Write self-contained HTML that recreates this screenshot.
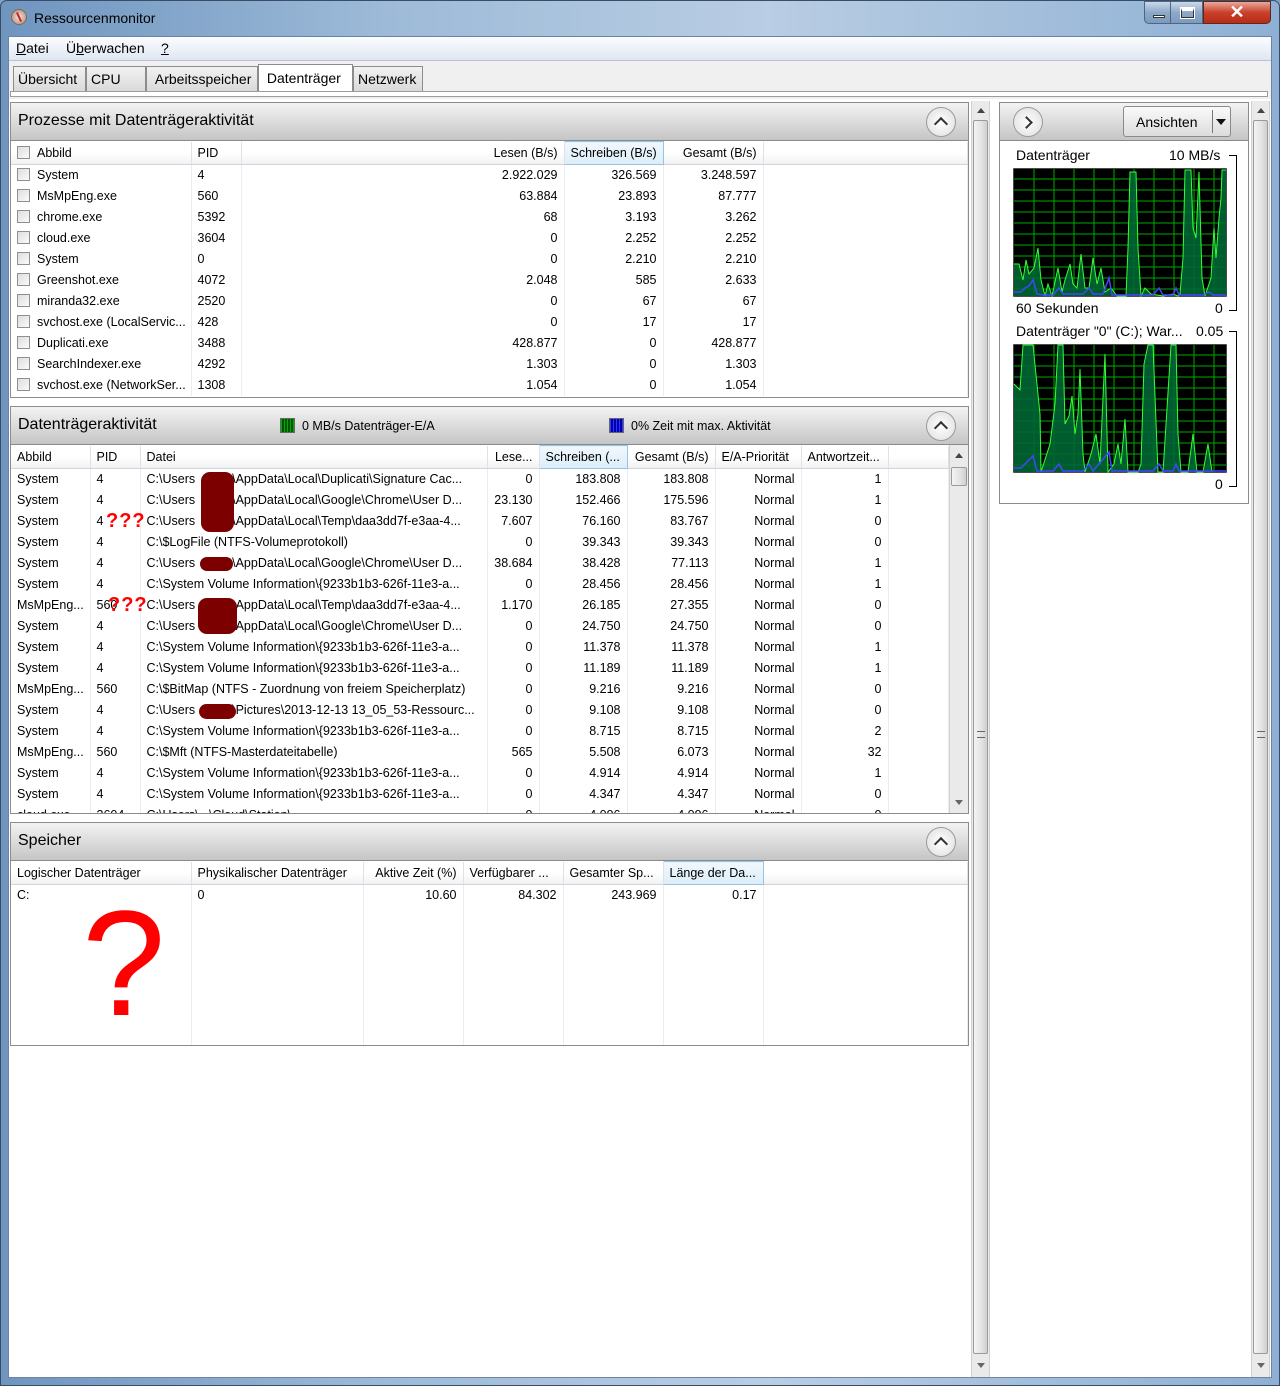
<!DOCTYPE html>
<html><head><meta charset="utf-8">
<style>
*{box-sizing:border-box;margin:0;padding:0}
body{width:1280px;height:1386px;position:relative;overflow:hidden;background:#7fa3c8;font-family:"Liberation Sans",sans-serif;font-size:12px;color:#000}
.a{position:absolute}
.frame{left:0;top:0;width:1280px;height:1386px;background:linear-gradient(90deg,#6f95bf,#9dbad8 30%,#b9cde3 60%,#8eb0d4);border:1px solid #3a4d66;border-radius:7px 7px 0 0}
.client{left:8px;top:36px;width:1264px;height:1342px;background:#fff;border:1px solid #6d83a0}
.menu{left:9px;top:37px;width:1262px;height:24px;background:linear-gradient(#fbfcfe,#dfe7f3);border-bottom:1px solid #b6c2d4;font-size:14px}
.menu span{position:absolute;top:3px}
.tabbar{left:9px;top:61px;width:1262px;height:38px;background:#f0f0f0}
.tab{position:absolute;top:66px;height:26px;border:1px solid #8c8c8c;border-bottom:none;background:linear-gradient(#f2f2f2,#d8d8d8);font-size:14px;padding:4px 0 0 4px}
.panel{border:1px solid #8c8c8c;background:#fff}
.hdr{position:absolute;left:0;right:0;top:0;height:38px;background:linear-gradient(#f3f3f3,#c5c5c5);border-bottom:1px solid #8a8a8a;font-size:16px;padding:9px 0 0 7px}
.cb,.cb2{position:absolute;width:30px;height:30px;border-radius:50%;border:1px solid #9a9a9a;background:radial-gradient(#fff,#ddd);top:4px}
.cb::after{content:"";position:absolute;left:9px;top:11px;width:8px;height:8px;border-left:2.5px solid #333;border-top:2.5px solid #333;transform:rotate(45deg)}
.cb2::after{content:"";position:absolute;left:8px;top:10px;width:7px;height:7px;border-right:2.5px solid #333;border-top:2.5px solid #333;transform:rotate(45deg)}
table{border-collapse:collapse;table-layout:fixed;position:absolute}
td{height:21px;padding:0 6px;white-space:nowrap;overflow:hidden;border-right:1px solid #e7eef7;font-size:12.5px}
tr.h td{height:23px;background:linear-gradient(#fff 50%,#f1f2f4);border-right:1px solid #dde2e8;border-bottom:1px solid #d5d5d5}
tr.h td.s{background:linear-gradient(#f0f8fd,#dcedf8);border:1px solid #96c4e6}
.r{text-align:right}
.chk{display:inline-block;width:13px;height:13px;border:1px solid #8f8f8f;background:linear-gradient(135deg,#ddd,#fafafa);vertical-align:-2px;margin-right:7px}
.blob{position:absolute;background:#7c0000;border-radius:9px}
.q{position:absolute;color:#f00;font-size:20px;font-weight:bold;letter-spacing:1px}
.sb{background:#eaeaea;border-left:1px solid #d0d0d0}
.thumb{position:absolute;left:1px;right:1px;border:1px solid #9a9a9a;border-radius:2px;background:linear-gradient(90deg,#f4f4f4,#e2e2e2 60%,#cfcfcf)}
.tri-u{position:absolute;width:0;height:0;border-left:4px solid transparent;border-right:4px solid transparent;border-bottom:5px solid #444}
.tri-d{position:absolute;width:0;height:0;border-left:4px solid transparent;border-right:4px solid transparent;border-top:5px solid #666}
.g{display:inline-block;width:37px}
</style></head><body>
<div class="a frame"></div>
<div class="a" style="left:11px;top:9px;width:16px;height:16px;border-radius:50%;background:radial-gradient(#f4e6dc,#b08070);border:1px solid #7a6a60"><div class="a" style="left:6px;top:2px;width:2px;height:10px;background:#c22;transform:rotate(-25deg)"></div></div>
<div class="a" style="left:34px;top:10px;font-size:14px;color:#000">Ressourcenmonitor</div>
<div class="a" style="left:1144px;top:1px;width:27px;height:23px;border:1px solid #4f6580;border-radius:0 0 0 5px;background:linear-gradient(#c9d9ea,#8ea9c8 50%,#7d9abd)"><div class="a" style="left:8px;top:13px;width:12px;height:3px;background:#fff;border:1px solid #333"></div></div>
<div class="a" style="left:1170px;top:1px;width:33px;height:23px;border:1px solid #4f6580;background:linear-gradient(#c9d9ea,#8ea9c8 50%,#7d9abd)"><div class="a" style="left:10px;top:6px;width:13px;height:10px;border:1px solid #333;border-top:3px solid #fff;outline:1px solid #fff"></div></div>
<div class="a" style="left:1203px;top:1px;width:68px;height:23px;border:1px solid #5a2a20;border-radius:0 0 5px 0;background:linear-gradient(#e9a89a,#c9402b 50%,#b82c16);color:#fff;font-size:18px;font-weight:bold;text-align:center;line-height:21px">✕</div>
<div class="a client"></div>
<div class="a menu"><span style="left:7px"><u>D</u>atei</span><span style="left:57px">Ü<u>b</u>erwachen</span><span style="left:152px"><u>?</u></span></div>
<div class="a tabbar"></div>
<div class="tab" style="left:13px;width:73px">Übersicht</div>
<div class="tab" style="left:86px;width:60px">CPU</div>
<div class="tab" style="left:146px;width:112px">&nbsp;Arbeitsspeicher</div>
<div class="tab" style="left:258px;top:64px;height:30px;width:95px;background:#fff;padding-top:5px">&nbsp;Datenträger</div>
<div class="tab" style="left:353px;width:70px">Netzwerk</div>
<div class="a" style="left:10px;top:91px;width:1258px;height:6px;border:1px solid #9c9c9c;background:#fff"></div>

<div class="a panel" style="left:10px;top:102px;width:959px;height:296px">
<div class="hdr">Prozesse mit Datenträgeraktivität<div class="cb" style="right:12px"></div></div>
<table style="left:0;top:38px;width:957px">
<colgroup><col style="width:180px"><col style="width:50px"><col style="width:323px"><col style="width:99px"><col style="width:100px"><col></colgroup>
<tr class="h"><td><span class="chk"></span>Abbild</td><td>PID</td><td class="r">Lesen (B/s)</td><td class="s r">Schreiben (B/s)</td><td class="r">Gesamt (B/s)</td><td></td></tr>
<tr><td><span class="chk"></span>System</td><td>4</td><td class="r">2.922.029</td><td class="r">326.569</td><td class="r">3.248.597</td><td></td></tr>
<tr><td><span class="chk"></span>MsMpEng.exe</td><td>560</td><td class="r">63.884</td><td class="r">23.893</td><td class="r">87.777</td><td></td></tr>
<tr><td><span class="chk"></span>chrome.exe</td><td>5392</td><td class="r">68</td><td class="r">3.193</td><td class="r">3.262</td><td></td></tr>
<tr><td><span class="chk"></span>cloud.exe</td><td>3604</td><td class="r">0</td><td class="r">2.252</td><td class="r">2.252</td><td></td></tr>
<tr><td><span class="chk"></span>System</td><td>0</td><td class="r">0</td><td class="r">2.210</td><td class="r">2.210</td><td></td></tr>
<tr><td><span class="chk"></span>Greenshot.exe</td><td>4072</td><td class="r">2.048</td><td class="r">585</td><td class="r">2.633</td><td></td></tr>
<tr><td><span class="chk"></span>miranda32.exe</td><td>2520</td><td class="r">0</td><td class="r">67</td><td class="r">67</td><td></td></tr>
<tr><td><span class="chk"></span>svchost.exe (LocalServic...</td><td>428</td><td class="r">0</td><td class="r">17</td><td class="r">17</td><td></td></tr>
<tr><td><span class="chk"></span>Duplicati.exe</td><td>3488</td><td class="r">428.877</td><td class="r">0</td><td class="r">428.877</td><td></td></tr>
<tr><td><span class="chk"></span>SearchIndexer.exe</td><td>4292</td><td class="r">1.303</td><td class="r">0</td><td class="r">1.303</td><td></td></tr>
<tr><td><span class="chk"></span>svchost.exe (NetworkSer...</td><td>1308</td><td class="r">1.054</td><td class="r">0</td><td class="r">1.054</td><td></td></tr>
</table>
</div>

<div class="a panel" style="left:10px;top:406px;width:959px;height:408px;overflow:hidden">
<div class="hdr">Datenträgeraktivität<div class="cb" style="right:12px"></div>
<div class="a" style="left:269px;top:11px;width:15px;height:15px;border:1px solid #666;background:repeating-linear-gradient(90deg,#0a0 0 1px,#050 1px 3px)"></div>
<div class="a" style="left:291px;top:12px;font-size:12.5px">0 MB/s Datenträger-E/A</div>
<div class="a" style="left:598px;top:11px;width:15px;height:15px;border:1px solid #666;background:repeating-linear-gradient(90deg,#33f 0 1px,#00a 1px 3px)"></div>
<div class="a" style="left:620px;top:12px;font-size:12.5px">0% Zeit mit max. Aktivität</div>
</div>
<table style="left:0;top:38px;width:938px">
<colgroup><col style="width:79px"><col style="width:50px"><col style="width:347px"><col style="width:52px"><col style="width:88px"><col style="width:88px"><col style="width:86px"><col style="width:87px"><col></colgroup>
<tr class="h"><td>Abbild</td><td>PID</td><td>Datei</td><td class="r">Lese...</td><td class="s">Schreiben (...</td><td class="r">Gesamt (B/s)</td><td>E/A-Priorität</td><td>Antwortzeit...</td><td></td></tr>
<tr><td>System</td><td>4</td><td>C:\Users<span class="g"></span>\AppData\Local\Duplicati\Signature Cac...</td><td class="r">0</td><td class="r">183.808</td><td class="r">183.808</td><td class="r">Normal</td><td class="r">1</td><td></td></tr>
<tr><td>System</td><td>4</td><td>C:\Users<span class="g"></span>\AppData\Local\Google\Chrome\User D...</td><td class="r">23.130</td><td class="r">152.466</td><td class="r">175.596</td><td class="r">Normal</td><td class="r">1</td><td></td></tr>
<tr><td>System</td><td>4</td><td>C:\Users<span class="g"></span>\AppData\Local\Temp\daa3dd7f-e3aa-4...</td><td class="r">7.607</td><td class="r">76.160</td><td class="r">83.767</td><td class="r">Normal</td><td class="r">0</td><td></td></tr>
<tr><td>System</td><td>4</td><td>C:\$LogFile (NTFS-Volumeprotokoll)</td><td class="r">0</td><td class="r">39.343</td><td class="r">39.343</td><td class="r">Normal</td><td class="r">0</td><td></td></tr>
<tr><td>System</td><td>4</td><td>C:\Users<span class="g"></span>\AppData\Local\Google\Chrome\User D...</td><td class="r">38.684</td><td class="r">38.428</td><td class="r">77.113</td><td class="r">Normal</td><td class="r">1</td><td></td></tr>
<tr><td>System</td><td>4</td><td>C:\System Volume Information\{9233b1b3-626f-11e3-a...</td><td class="r">0</td><td class="r">28.456</td><td class="r">28.456</td><td class="r">Normal</td><td class="r">1</td><td></td></tr>
<tr><td>MsMpEng...</td><td>560</td><td>C:\Users<span class="g"></span>\AppData\Local\Temp\daa3dd7f-e3aa-4...</td><td class="r">1.170</td><td class="r">26.185</td><td class="r">27.355</td><td class="r">Normal</td><td class="r">0</td><td></td></tr>
<tr><td>System</td><td>4</td><td>C:\Users<span class="g"></span>\AppData\Local\Google\Chrome\User D...</td><td class="r">0</td><td class="r">24.750</td><td class="r">24.750</td><td class="r">Normal</td><td class="r">0</td><td></td></tr>
<tr><td>System</td><td>4</td><td>C:\System Volume Information\{9233b1b3-626f-11e3-a...</td><td class="r">0</td><td class="r">11.378</td><td class="r">11.378</td><td class="r">Normal</td><td class="r">1</td><td></td></tr>
<tr><td>System</td><td>4</td><td>C:\System Volume Information\{9233b1b3-626f-11e3-a...</td><td class="r">0</td><td class="r">11.189</td><td class="r">11.189</td><td class="r">Normal</td><td class="r">1</td><td></td></tr>
<tr><td>MsMpEng...</td><td>560</td><td>C:\$BitMap (NTFS - Zuordnung von freiem Speicherplatz)</td><td class="r">0</td><td class="r">9.216</td><td class="r">9.216</td><td class="r">Normal</td><td class="r">0</td><td></td></tr>
<tr><td>System</td><td>4</td><td>C:\Users<span class="g"></span>\Pictures\2013-12-13 13_05_53-Ressourc...</td><td class="r">0</td><td class="r">9.108</td><td class="r">9.108</td><td class="r">Normal</td><td class="r">0</td><td></td></tr>
<tr><td>System</td><td>4</td><td>C:\System Volume Information\{9233b1b3-626f-11e3-a...</td><td class="r">0</td><td class="r">8.715</td><td class="r">8.715</td><td class="r">Normal</td><td class="r">2</td><td></td></tr>
<tr><td>MsMpEng...</td><td>560</td><td>C:\$Mft (NTFS-Masterdateitabelle)</td><td class="r">565</td><td class="r">5.508</td><td class="r">6.073</td><td class="r">Normal</td><td class="r">32</td><td></td></tr>
<tr><td>System</td><td>4</td><td>C:\System Volume Information\{9233b1b3-626f-11e3-a...</td><td class="r">0</td><td class="r">4.914</td><td class="r">4.914</td><td class="r">Normal</td><td class="r">1</td><td></td></tr>
<tr><td>System</td><td>4</td><td>C:\System Volume Information\{9233b1b3-626f-11e3-a...</td><td class="r">0</td><td class="r">4.347</td><td class="r">4.347</td><td class="r">Normal</td><td class="r">0</td><td></td></tr>
<tr><td>cloud.exe</td><td>3604</td><td>C:\Users\...\Cloud\Station\...</td><td class="r">0</td><td class="r">4.096</td><td class="r">4.096</td><td class="r">Normal</td><td class="r">0</td><td></td></tr>
</table>
<div class="a sb" style="left:938px;top:38px;width:19px;height:369px"><div class="tri-u" style="left:5px;top:8px"></div><div class="thumb" style="top:22px;height:19px"></div><div class="tri-d" style="left:5px;top:355px"></div></div>
</div>
<div class="blob" style="left:201px;top:472px;width:33px;height:60px"></div>
<div class="blob" style="left:200px;top:557px;width:33px;height:14px"></div>
<div class="blob" style="left:198px;top:598px;width:39px;height:36px"></div>
<div class="blob" style="left:199px;top:704px;width:37px;height:15px"></div>
<div class="q" style="left:106px;top:510px">???</div>
<div class="q" style="left:108px;top:594px">???</div>

<div class="a panel" style="left:10px;top:822px;width:959px;height:224px;overflow:hidden">
<div class="hdr">Speicher<div class="cb" style="right:12px"></div></div>
<table style="left:0;top:38px;width:957px">
<colgroup><col style="width:180px"><col style="width:172px"><col style="width:100px"><col style="width:100px"><col style="width:100px"><col style="width:100px"><col></colgroup>
<tr class="h"><td>Logischer Datenträger</td><td>Physikalischer Datenträger</td><td class="r">Aktive Zeit (%)</td><td>Verfügbarer ...</td><td>Gesamter Sp...</td><td class="s">Länge der Da...</td><td></td></tr>
<tr><td style="height:162px;vertical-align:top;padding-top:3px">C:</td><td style="vertical-align:top;padding-top:3px">0</td><td class="r" style="vertical-align:top;padding-top:3px">10.60</td><td class="r" style="vertical-align:top;padding-top:3px">84.302</td><td class="r" style="vertical-align:top;padding-top:3px">243.969</td><td class="r" style="vertical-align:top;padding-top:3px">0.17</td><td></td></tr>
</table>
</div>
<div class="a" style="left:82px;top:888px;color:#f00;font-size:150px;font-family:'Liberation Sans',sans-serif;line-height:1">?</div>

<div class="a sb" style="left:971px;top:101px;width:19px;height:1276px;border-right:1px solid #d0d0d0"><div class="tri-u" style="left:5px;top:7px"></div><div class="thumb" style="top:19px;height:1234px"></div><div class="a" style="left:5px;top:630px;width:8px;height:7px;border-top:1px solid #666;border-bottom:1px solid #666"></div><div class="tri-d" style="left:5px;top:1262px"></div></div>

<div class="a panel" style="left:999px;top:102px;width:250px;height:402px">
<div class="hdr" style="padding:0"><div class="cb2" style="left:13px"></div>
<div class="a" style="left:123px;top:3px;width:108px;height:31px;border:1px solid #8a8a8a;border-radius:3px;background:linear-gradient(#fafafa,#dcdcdc);font-size:14px;padding:7px 0 0 12px">Ansichten<div class="a" style="left:88px;top:3px;width:1px;height:23px;background:#777"></div><div class="a" style="left:92px;top:12px;border-left:5px solid transparent;border-right:5px solid transparent;border-top:6px solid #111"></div></div>
</div>
</div>
<div class="a" style="left:1016px;top:147px;font-size:14px">Datenträger</div>
<div class="a" style="left:1169px;top:147px;font-size:14px">10 MB/s</div>
<div class="a" style="left:1016px;top:300px;font-size:14px">60 Sekunden</div>
<div class="a" style="left:1215px;top:300px;font-size:14px">0</div>
<div class="a" style="left:1016px;top:323px;font-size:14px">Datenträger "0" (C:); War...</div>
<div class="a" style="left:1196px;top:323px;font-size:14px">0.05</div>
<div class="a" style="left:1215px;top:476px;font-size:14px">0</div>
<div class="a" style="left:1229px;top:155px;width:8px;height:156px;border:1px solid #000;border-left:none"></div>
<div class="a" style="left:1229px;top:331px;width:8px;height:156px;border:1px solid #000;border-left:none"></div>
<svg class="a" style="left:1013px;top:168px" width="214" height="129" viewBox="0 0 214 129">
<rect width="214" height="129" fill="#000" stroke="#999"/>
<g stroke="#0a0" stroke-width="1">
<path d="M1 11H213M1 22H213M1 33H213M1 44H213M1 55H213M1 66H213M1 77H213M1 88H213M1 99H213M1 110H213M1 121H213"/>
<path d="M21 1V128M41 1V128M61 1V128M81 1V128M101 1V128M121 1V128M141 1V128M161 1V128M181 1V128M201 1V128"/>
</g>
<polygon fill="#063" fill-opacity=".9" points="1,128 1,96 6,96 10,112 13,92 16,106 21,100 25,80 28,112 32,128 35,116 39,128 45,100 49,124 52,112 57,96 60,116 64,120 68,86 72,120 76,120 80,90 84,116 88,100 92,124 98,120 104,128 113,128 115,80 117,4 123,4 125,80 128,128 132,120 138,126 150,128 160,126 165,128 167,126 170,90 172,2 178,2 180,60 183,70 186,4 189,110 192,128 198,110 201,60 203,90 206,50 208,30 209,2 213,2 213,128"/>
<polyline fill="none" stroke="#3f3" stroke-width="1" points="1,96 6,96 10,112 13,92 16,106 21,100 25,80 28,112 32,128 35,116 39,128 45,100 49,124 52,112 57,96 60,116 64,120 68,86 72,120 76,120 80,90 84,116 88,100 92,124 98,120 104,128 113,128 115,80 117,4 123,4 125,80 128,128 132,120 138,126 150,128 160,126 165,128 167,126 170,90 172,2 178,2 180,60 183,70 186,4 189,110 192,128 198,110 201,60 203,90 206,50 208,30 209,2 213,2"/>
<polyline fill="none" stroke="#44f" stroke-width="1.5" points="1,124 8,124 12,120 16,118 20,112 24,126 30,127 40,127 46,120 50,126 60,126 70,126 76,120 80,126 90,126 96,110 99,127 110,127 140,127 146,120 150,127 160,127 163,120 166,127 190,127 196,124 200,127 213,127"/>
</svg>
<svg class="a" style="left:1013px;top:344px" width="214" height="129" viewBox="0 0 214 129">
<rect width="214" height="129" fill="#000" stroke="#999"/>
<g stroke="#0a0" stroke-width="1">
<path d="M1 11H213M1 22H213M1 33H213M1 44H213M1 55H213M1 66H213M1 77H213M1 88H213M1 99H213M1 110H213M1 121H213"/>
<path d="M21 1V128M41 1V128M61 1V128M81 1V128M101 1V128M121 1V128M141 1V128M161 1V128M181 1V128M201 1V128"/>
</g>
<polygon fill="#063" fill-opacity=".9" points="1,128 1,40 7,46 10,1 20,1 27,70 28,128 37,100 42,60 45,1 50,1 52,80 56,72 59,52 62,90 65,70 67,25 70,110 72,128 78,110 83,90 87,120 92,10 95,128 101,120 105,100 108,120 112,75 115,128 125,128 128,120 131,20 135,1 140,1 145,128 150,128 158,1 163,1 165,90 168,128 175,128 180,90 184,128 190,128 195,100 199,128 201,128 213,128"/>
<polyline fill="none" stroke="#3f3" stroke-width="1" points="1,40 7,46 10,1 20,1 27,70 28,128 37,100 42,60 45,1 50,1 52,80 56,72 59,52 62,90 65,70 67,25 70,110 72,128 78,110 83,90 87,120 92,10 95,128 101,120 105,100 108,120 112,75 115,128 125,128 128,120 131,20 135,1 140,1 145,128 150,128 158,1 163,1 165,90 168,128 175,128 180,90 184,128 190,128 195,100 199,128"/>
<polyline fill="none" stroke="#44f" stroke-width="1.5" points="1,124 8,124 14,118 20,112 24,127 40,127 46,120 50,127 60,127 70,127 76,120 80,127 96,108 99,127 110,127 140,127 146,120 150,127 160,127 163,120 166,127 213,127"/>
</svg>

<div class="a sb" style="left:1251px;top:101px;width:19px;height:1276px;border-right:1px solid #d0d0d0"><div class="tri-u" style="left:5px;top:7px"></div><div class="thumb" style="top:19px;height:1234px"></div><div class="a" style="left:5px;top:630px;width:8px;height:7px;border-top:1px solid #666;border-bottom:1px solid #666"></div><div class="tri-d" style="left:5px;top:1262px"></div></div>
</body></html>
